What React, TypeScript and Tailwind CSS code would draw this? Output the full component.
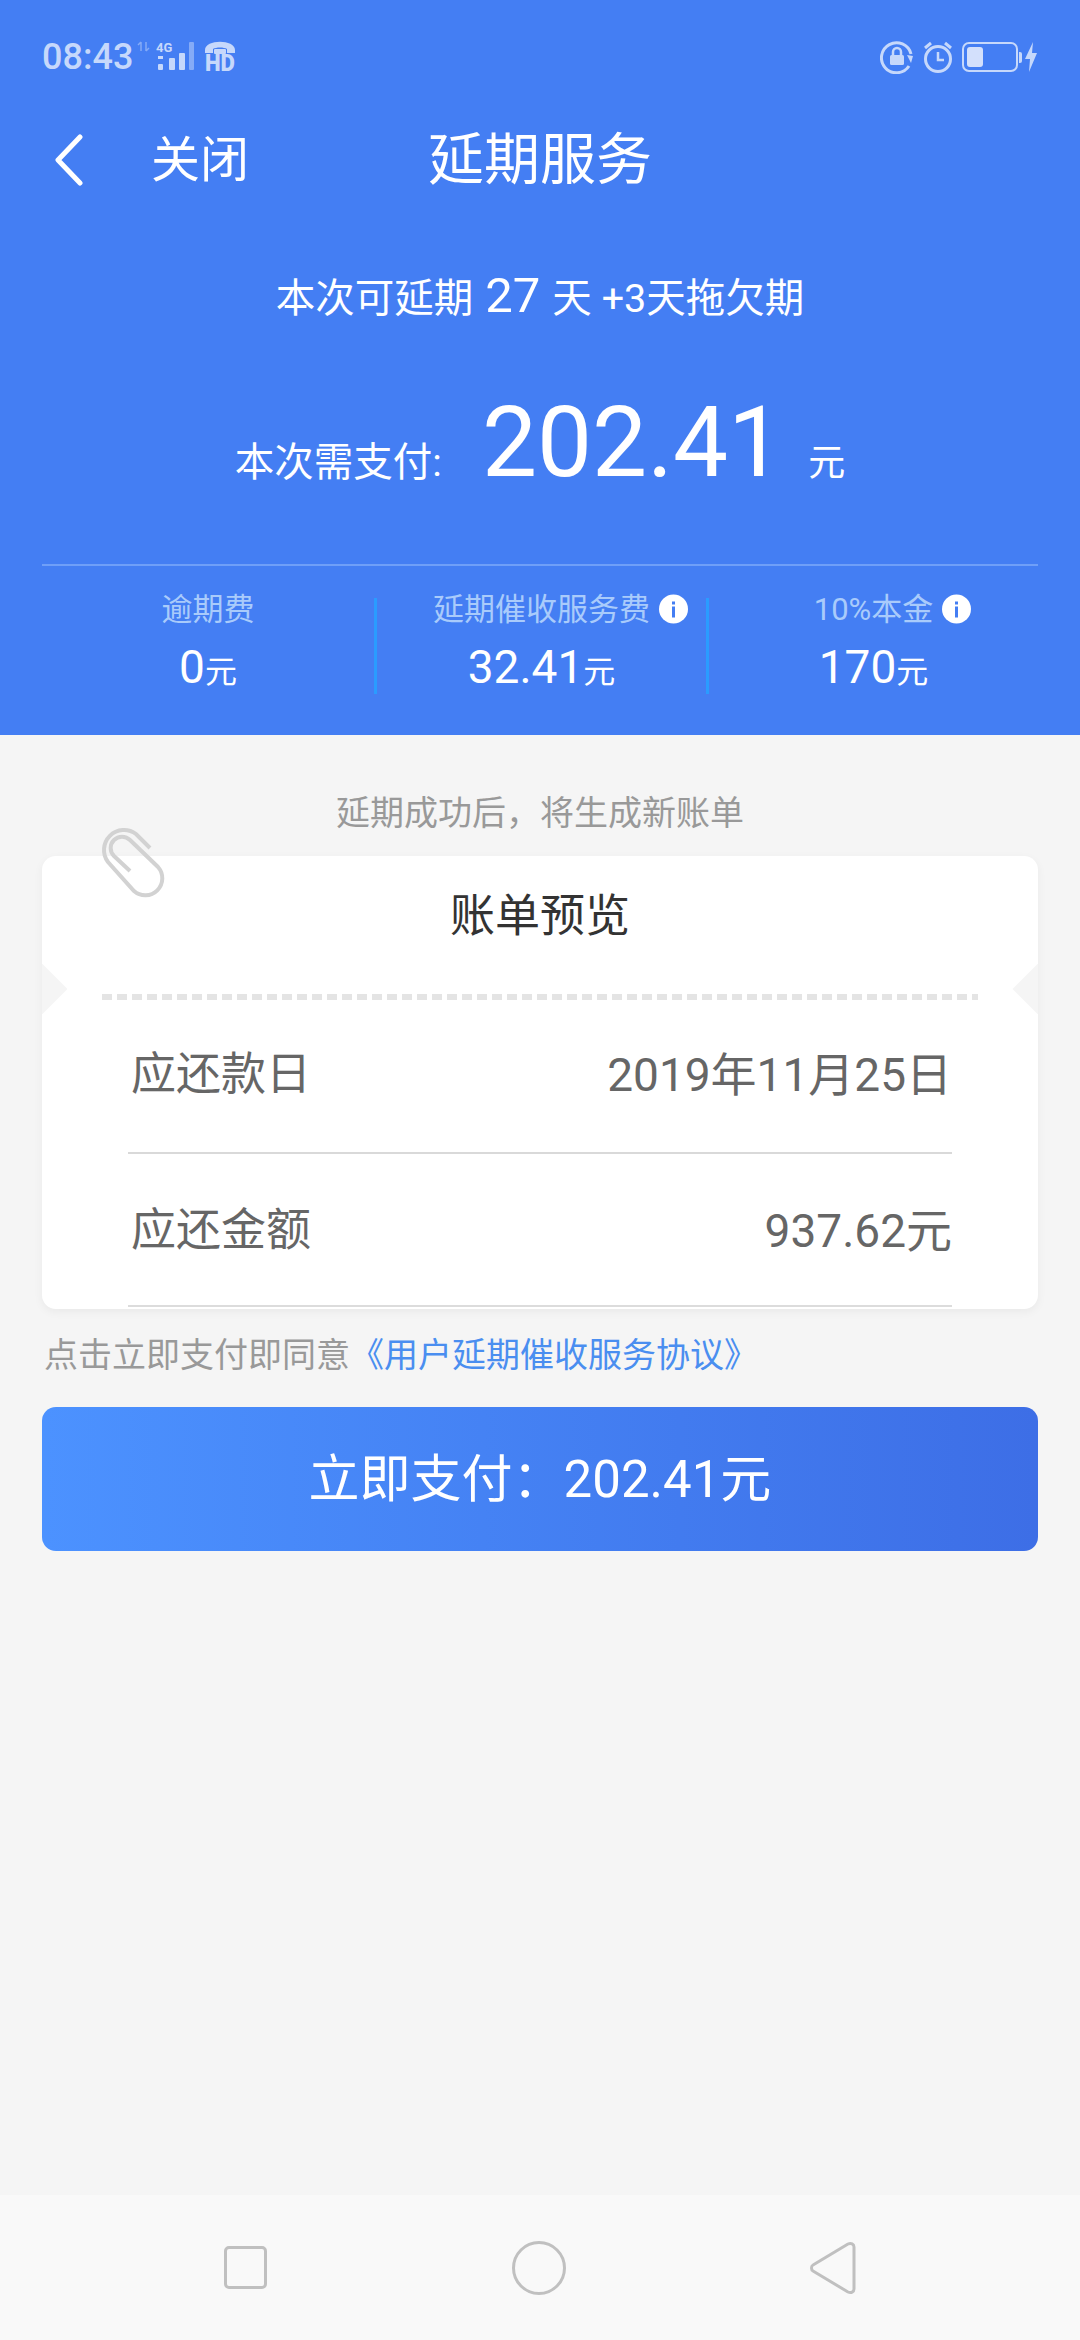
const stats = [
  { label: '逾期费', value: '0', info: false },
  { label: '延期催收服务费', value: '32.41', info: true },
  { label: '10%本金', value: '170', info: true },
];

function InfoDot() {
  return (
    <span className="absolute left-full top-1/2 ml-[9px] flex h-[29px] w-[29px] -translate-y-1/2 flex-col items-center justify-center gap-[2px] rounded-full bg-white">
      <span className="h-[3px] w-[3px] bg-[#447ef3]" />
      <span className="h-[11px] w-[3px] bg-[#447ef3]" />
    </span>
  );
}

function StatusBar() {
  return (
    <div className="flex h-[114px] items-center justify-between px-[42px] text-[#c6d8fb]">
      <div className="flex items-center">
        <span className="text-[36px] font-medium leading-none">08:43</span>
        <svg width="100" height="44" viewBox="0 -4 100 44" className="ml-[3px] overflow-visible" fill="currentColor">
          <path d="M5 3v9M2 6l3-3M10 3v9M10 12l3-3" stroke="currentColor" strokeWidth="1.5" fill="none" opacity="0.5" />
          <text x="20" y="13" fontSize="13" fontWeight="700" fontFamily="Roboto">4G</text>
          <rect x="22" y="25" width="5" height="6" rx="1" />
          <rect x="22" y="17" width="5" height="3" />
          <rect x="33" y="19" width="6" height="12" rx="1" />
          <rect x="43" y="14" width="6" height="17" rx="1" />
          <rect x="53" y="3" width="5" height="28" rx="1" opacity="0.5" />
          <path d="M69 11c0-11 30-11 30 0v3h-8v-4c-3-2-11-2-14 0v4h-8z" />
          <rect x="78" y="10" width="12" height="5" rx="1" />
          <text x="69" y="32" fontSize="23" fontWeight="900" fontFamily="Roboto" textLength="30" lengthAdjust="spacingAndGlyphs">HD</text>
        </svg>
      </div>
      <div className="flex items-center gap-[9px]">
        <svg width="34" height="34" viewBox="0 0 34 34" fill="none" stroke="currentColor" strokeWidth="3">
          <path d="M29 26a15 15 0 1 1 2-12" />
          <path d="M27 15l6 1-2 7z" fill="currentColor" stroke="none" />
          <rect x="10" y="15" width="14" height="10" rx="1.5" fill="currentColor" stroke="none" />
          <path d="M13 15v-3a4 4 0 0 1 8 0v3" strokeWidth="2.5" />
        </svg>
        <svg width="30" height="34" viewBox="0 0 30 34" fill="none" stroke="currentColor" strokeWidth="3">
          <circle cx="15" cy="19" r="12.5" />
          <path d="M15 12v8h6" strokeWidth="2.5" />
          <path d="M2 8l6-5M28 8l-6-5" />
        </svg>
        <div className="flex items-center">
          <div className="flex h-[30px] w-[56px] rounded-[7px] border-[2.5px] border-current p-[3px]">
            <div className="h-full w-[16px] rounded-[3px] bg-[#d3e0fc]" />
          </div>
          <div className="ml-[1px] h-[11px] w-[3px] rounded-r-[2px] bg-current" />
          <svg width="14" height="30" viewBox="0 0 14 30" fill="currentColor" className="ml-[2px]">
            <path d="M9 0L1 17h5l-1 13 8-19H8z" />
          </svg>
        </div>
      </div>
    </div>
  );
}

function Header() {
  return (
    <div className="flex h-[735px] shrink-0 flex-col bg-[#447ef3] text-white">
      <StatusBar />
      <div className="mt-[2px] flex h-[88px] items-center px-[42px]">
        <div className="flex flex-1 items-center">
          <svg width="30" height="52" viewBox="0 0 30 52" fill="none" stroke="currentColor" strokeWidth="5" strokeLinecap="round" strokeLinejoin="round" className="ml-[12px]">
            <path d="M26 3L4 26l22 23" />
          </svg>
          <span className="ml-[67px] text-[49px] leading-none">关闭</span>
        </div>
        <span className="text-[56px] leading-none">延期服务</span>
        <div className="flex-1" />
      </div>
      <div className="mt-[48px] flex items-baseline justify-center text-[39.5px] leading-[88px]">
        本次可延期<span className="mx-[12px] text-[49px]">27</span>天 +3天拖欠期
      </div>
      <div className="mt-[40px] flex items-baseline justify-center text-[39.5px] leading-[120px]">
        本次需支付:
        <span className="ml-[40px] text-[98px]">202.41</span>
        <span className="ml-[25px] text-[37px]">元</span>
      </div>
      <div className="mx-[42px] mt-[40px] h-[2px] bg-[#6f9ff8]" />
      <div className="mx-[42px] mt-[32px] grid grid-cols-3">
        {stats.map((s, i) => (
          <div
            key={s.label}
            className={`flex h-[96px] flex-col items-center justify-between ${i > 0 ? 'border-l-[3px] border-[#2a9cff]' : ''}`}
          >
            <div className="relative flex h-[22px] items-center justify-center">
              <span className="text-[31px] leading-none text-[#a9cbfb]">{s.label}</span>
              {s.info && <InfoDot />}
            </div>
            <div className="-mb-[2px] flex items-baseline leading-[48px]">
              <span className="text-[46px]">{s.value}</span>
              <span className="text-[32px]">元</span>
            </div>
          </div>
        ))}
      </div>
    </div>
  );
}

function BillCard() {
  return (
    <div className="relative mx-[42px] mt-[20px] h-[453px] rounded-[14px] bg-white shadow-[0_3px_10px_rgba(0,0,0,0.05)]">
      <svg
        width="68"
        height="72"
        viewBox="100 48 68 72"
        fill="none"
        stroke="#d2d2d2"
        strokeWidth="4"
        className="absolute -top-[30px] left-[58px]"
      >
        <path d="M150 70L136 56A20 20 0 0 0 108 84L134 113A17 17 0 0 0 158 89L130 62A11 11 0 0 0 114 78L130 93" />
      </svg>
      {/* ticket notches */}
      <div className="absolute left-0 top-[108px] h-[50px] w-[25px] overflow-hidden">
        <div className="absolute -left-[18px] top-[7px] h-[36px] w-[36px] rotate-45 bg-[#f5f5f5]" />
      </div>
      <div className="absolute right-0 top-[108px] h-[50px] w-[29px] overflow-hidden">
        <div className="absolute -right-[18px] top-[7px] h-[36px] w-[36px] rotate-45 bg-[#f5f5f5]" />
      </div>

      <div className="flex h-[138px] items-end justify-center pb-[49px]">
        <span className="text-[45px] leading-[56px] text-[#333]">账单预览</span>
      </div>
      <div className="mx-[60px] h-[6px] bg-[repeating-linear-gradient(90deg,#e4e4e4_0_10px,transparent_10px_15px)]" />
      <div className="mx-[86px] flex h-[154px] items-center justify-between border-b-2 border-[#d9d9d9] pb-[2px] text-[#666]">
        <span className="ml-[3px] text-[45px]">应还款日</span>
        <span className="text-[46px]">2019年11月25日</span>
      </div>
      <div className="mx-[86px] flex h-[153px] items-center justify-between border-b-2 border-[#dcdcdc] pt-[3px] text-[#666]">
        <span className="ml-[3px] text-[45px]">应还金额</span>
        <span className="text-[46px]">937.62元</span>
      </div>
    </div>
  );
}

export default function App() {
  return (
    <div className="flex h-[2340px] w-[1080px] flex-col overflow-hidden bg-[#f5f5f5] font-['Roboto','Noto_Sans_CJK_SC',sans-serif]">
      <Header />
      <div className="mt-[55px] text-center text-[34px] leading-[46px] text-[#999]">延期成功后，将生成新账单</div>
      <BillCard />
      <div className="mx-[44px] mt-[23px] text-[34px] leading-[46px] text-[#999]">
        点击立即支付即同意<span className="text-[#4a8ef0]">《用户延期催收服务协议》</span>
      </div>
      <div className="mx-[42px] mt-[29px] flex h-[144px] items-center justify-center rounded-[14px] bg-gradient-to-r from-[#4c92ff] to-[#3d6ee6] pt-[3px] text-[51px] text-white">
        立即支付：202.41元
      </div>
      <div className="mt-auto flex h-[145px] items-start justify-between bg-[#f9f9f9] px-[224px] pt-[46px]">
        <div className="mt-[5px] h-[43px] w-[43px] rounded-[5px] border-[3px] border-[#c0c0c0]" />
        <div className="h-[54px] w-[54px] rounded-full border-[3px] border-[#c0c0c0]" />
        <svg width="46" height="54" viewBox="0 0 46 54" fill="none" stroke="#c0c0c0" strokeWidth="3">
          <path d="M3 24L38 3c3-1.500 6 0 6 3v42c0 3-3 4.500-6 3L3 30c-2-1-2-5 0-6z" strokeLinejoin="round" />
        </svg>
      </div>
    </div>
  );
}
